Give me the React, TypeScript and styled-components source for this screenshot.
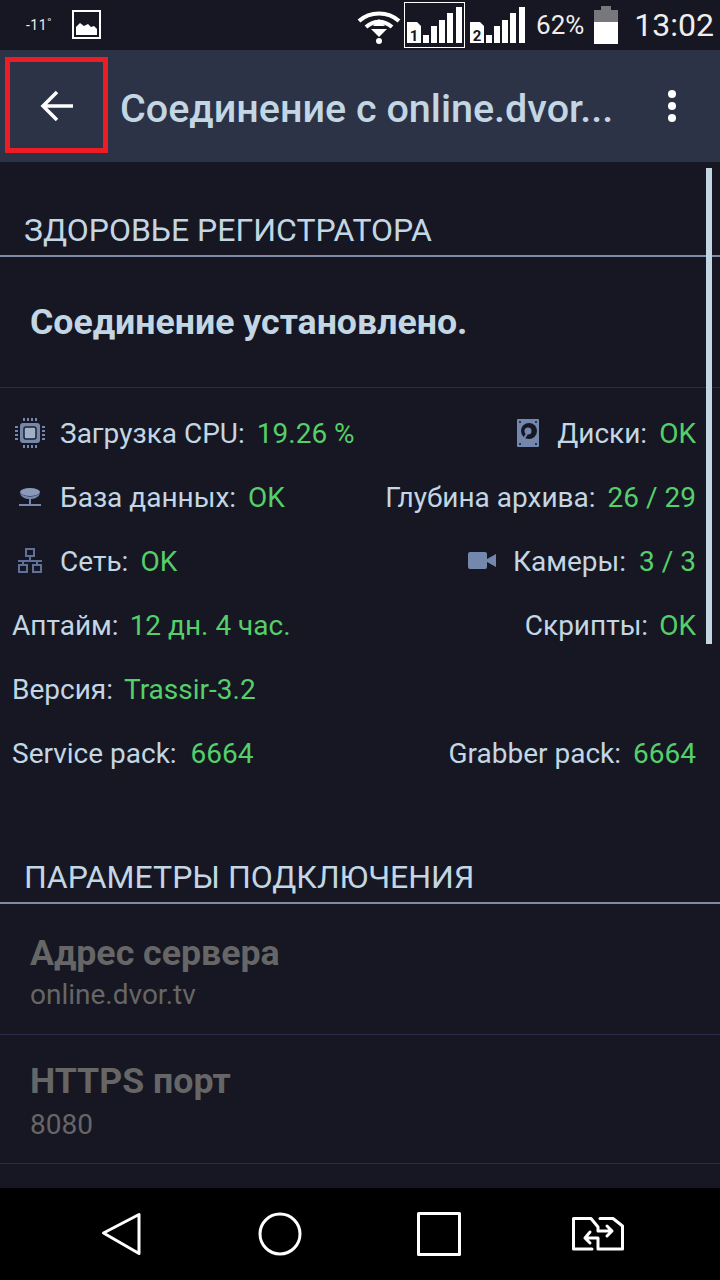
import React from "react";
import styled, { createGlobalStyle } from "styled-components";

const Global = createGlobalStyle`
    html, body { margin:0; padding:0; background:#161722; }
    * { box-sizing:border-box; }
`;

const Screen = styled.div`
    width:720px;
    height:1280px;
    display:flex;
    flex-direction:column;
    overflow:hidden;
    position:relative;
    background:#161722;
    font-family:Roboto, "Liberation Sans", sans-serif;
`;

const StatusBar = styled.div`
    height:50px;
    display:flex;
    align-items:center;
    color:#fff;
    flex:none;
`;
const Temp = styled.span`
    font-size:14px;
    margin-left:26px;
    width:46px;
    letter-spacing:0.5px;
    color:#eee;
`;
const StatusRight = styled.div`
    margin-left:auto;
    display:flex;
    align-items:center;
`;
const WifiIcon = styled.svg`
    margin-top:3px;
    margin-right:3px;
`;
const SignalIcon = styled.svg`
    margin-right:5px;
`;
const Percent = styled.span`
    font-size:26px;
    margin-left:6px;
    margin-right:10px;
    color:#eee;
`;
const Clock = styled.span`
    font-size:32px;
    margin-left:16px;
    margin-right:6px;
    color:#eee;
`;

const Toolbar = styled.div`
    height:112px;
    background:#2d3347;
    display:flex;
    align-items:center;
    flex:none;
    position:relative;
`;
const BackButton = styled.div`
    width:112px;
    display:flex;
    justify-content:center;
    padding-left:2px;
`;
const Title = styled.div`
    width:500px;
    margin-left:8px;
    margin-top:4px;
    font-size:39.500px;
    font-weight:500;
    color:#c3d6e4;
    white-space:nowrap;
`;
const MoreButton = styled.div`
    margin-left:47px;
    display:flex;
`;
const Highlight = styled.div`
    position:absolute;
    left:5px;
    top:7px;
    width:103px;
    height:96px;
    border:5px solid #ee1c25;
`;

const Content = styled.div`
    flex:1;
    min-height:0;
    overflow:hidden;
    position:relative;
`;
const ScrollThumb = styled.div`
    position:absolute;
    right:8px;
    top:6px;
    width:6px;
    height:476px;
    background:#c3d6e4;
`;
const SectionTitle = styled.div<{ $top: number }>`
    margin-top:${({ $top }) => $top}px;
    height:45px;
    padding-left:24px;
    font-size:32px;
    line-height:36px;
    color:#c3d6e4;
    border-bottom:2px solid #7e8ba8;
    white-space:nowrap;
`;
const StatusMessage = styled.div`
    height:131px;
    padding-left:30px;
    display:flex;
    align-items:center;
    font-size:35.700px;
    font-weight:700;
    color:#c3d6e4;
    border-bottom:1px solid #2c2e3a;
`;
const Stats = styled.div`
    padding:13px 24px 0 12px;
`;
const StatRow = styled.div`
    height:64px;
    display:flex;
    justify-content:space-between;
    align-items:center;
`;
const Stat = styled.div`
    display:flex;
    align-items:center;
    font-size:28px;
    color:#c3d6e4;
    white-space:nowrap;
`;
const StatIcon = styled.span<{ $w: number; $gap: number }>`
    display:flex;
    justify-content:center;
    width:${({ $w }) => $w}px;
    margin-right:${({ $gap }) => $gap}px;
`;
const Value = styled.span<{ $gap?: number }>`
    color:#55cf69;
    margin-left:${({ $gap }) => $gap ?? 12}px;
`;
const Param = styled.div<{ $h: number; $pt: number }>`
    height:${({ $h }) => $h}px;
    padding:${({ $pt }) => $pt}px 0 0 30px;
    border-bottom:1px solid #2d2b4a;
`;
const ParamName = styled.div`
    font-size:35.700px;
    font-weight:700;
    line-height:46px;
    color:#666;
`;
const ParamValue = styled.div<{ $mt?: number }>`
    font-size:28px;
    line-height:38px;
    color:#666;
    margin-top:${({ $mt }) => $mt ?? 0}px;
`;

const NavBar = styled.div`
    height:92px;
    background:#000;
    flex:none;
    display:flex;
    align-items:flex-start;
    padding:24px 0 0 101px;
`;
const NavSlot = styled.div<{ $w: number }>`
    width:${({ $w }) => $w}px;
    display:flex;
`;
const SwitchIcon = styled.svg`
    margin-top:5px;
`;

const Cpu = () => (
    <svg width="32" height="32" viewBox="0 0 32 32">
        <rect x="6" y="6" width="20" height="20" rx="3" fill="#7487ac" />
        <rect x="10" y="10" width="12" height="12" rx="2" fill="#a0aec6" stroke="#1d2130" strokeWidth="1.5" />
        <path d="M10 1v3M14 1v3M18 1v3M22 1v3M10 28v3M14 28v3M18 28v3M22 28v3M1 10h3M1 14h3M1 18h3M1 22h3M28 10h3M28 14h3M28 18h3M28 22h3" stroke="#7487ac" strokeWidth="2" />
    </svg>
);
const Database = () => (
    <svg width="24" height="20" viewBox="0 0 24 20">
        <ellipse cx="12" cy="5" rx="10" ry="4" fill="#8a9ab8" />
        <path d="M2 6c1 4 5 6 10 6s9-2 10-6c-2 2-6 3.500-10 3.500S4 8 2 6z" fill="#7487ac" />
        <path d="M12 12v5M1 18h22" stroke="#7487ac" strokeWidth="2" />
    </svg>
);
const Network = () => (
    <svg width="26" height="26" viewBox="0 0 26 26" fill="none" stroke="#5f7196" strokeWidth="2">
        <rect x="9" y="1" width="8" height="7" />
        <rect x="2" y="17" width="8" height="7" />
        <rect x="16" y="17" width="8" height="7" />
        <path d="M13 8v5M6 17v-4h14v4M1 13h24" />
    </svg>
);
const Disk = () => (
    <svg width="23" height="28" viewBox="0 0 23 28">
        <rect width="22" height="28" rx="1" fill="#7487ac" />
        <circle cx="12" cy="12" r="8" fill="#161722" />
        <circle cx="11" cy="12" r="3.500" fill="#7487ac" />
        <path d="M5 22l5-7" stroke="#7487ac" strokeWidth="2" />
        <circle cx="3" cy="3" r="1" fill="#161722" />
        <circle cx="19" cy="3" r="1" fill="#161722" />
        <circle cx="3" cy="25" r="1" fill="#161722" />
        <circle cx="19" cy="25" r="1" fill="#161722" />
    </svg>
);
const Camera = () => (
    <svg width="28" height="18" viewBox="0 0 28 18">
        <rect width="19" height="17" rx="2" fill="#7487ac" />
        <path d="M19 7l9-5v13l-9-5z" fill="#7487ac" />
    </svg>
);
const Wifi = () => (
    <WifiIcon width="44" height="34" viewBox="0 0 44 34" fill="none">
        <path d="M2 11C13 1 31 1 42 11" stroke="#fff" strokeWidth="4" />
        <path d="M9 17c8-7 18-7 26 0" stroke="#fff" strokeWidth="4" />
        <path d="M22 9l6 7H16z" fill="#fff" />
        <path d="M22 27l-8-8h16z" fill="#fff" />
        <circle cx="22" cy="31" r="3" fill="#fff" />
    </WifiIcon>
);
const Signal = ({ sim, framed }: { sim: string; framed?: boolean }) => (
    <SignalIcon width={framed ? 61 : 55} height={framed ? 46 : 38} viewBox={framed ? "0 0 61 46" : "3 4 55 38"}>
        {framed && <rect x="0.500" y="0.500" width="60" height="45" fill="none" stroke="#fff" />}
        <path d="M3 20h10l4 4v17H3z" fill="#fff" />
        <text x="10" y="39" fontSize="15" fontWeight="700" textAnchor="middle" fill="#161722" fontFamily="Roboto">{sim}</text>
        <rect x="19" y="33" width="6" height="8" fill="#fff" />
        <rect x="27" y="24" width="6" height="17" fill="#fff" />
        <rect x="35" y="18" width="6" height="23" fill="#fff" />
        <rect x="43" y="11" width="6" height="30" fill="#fff" />
        <rect x="52" y="5" width="6" height="36" fill="#fff" />
    </SignalIcon>
);
const Battery = () => (
    <svg width="24" height="38" viewBox="0 0 24 38">
        <path d="M7 0h10v4h7v12H0V4h7z" fill="#77777d" />
        <rect y="16" width="24" height="22" fill="#fff" />
    </svg>
);

export default function App() {
    return (
        <Screen>
            <Global />
            <StatusBar>
                <Temp>-11˚</Temp>
                <svg width="30" height="30" viewBox="0 0 30 30">
                    <rect x="1" y="1" width="27" height="27" fill="none" stroke="#fff" strokeWidth="2" />
                    <path d="M4 25v-8l4-4 4 3 4-2 3 3 3-1 3 3v6z" fill="#fff" />
                </svg>
                <StatusRight>
                    <Wifi />
                    <Signal sim="1" framed />
                    <Signal sim="2" />
                    <Percent>62%</Percent>
                    <Battery />
                    <Clock>13:02</Clock>
                </StatusRight>
            </StatusBar>
            <Toolbar>
                <BackButton>
                    <svg width="34" height="32" viewBox="0 0 34 32" fill="none" stroke="#fff" strokeWidth="3.500">
                        <path d="M33 16H3M17 2L3 16l14 14" />
                    </svg>
                </BackButton>
                <Title>Соединение с online.dvor...</Title>
                <MoreButton>
                    <svg width="10" height="34" viewBox="0 0 10 34" fill="#fff">
                        <circle cx="5" cy="5" r="4" />
                        <circle cx="5" cy="17" r="4" />
                        <circle cx="5" cy="29" r="4" />
                    </svg>
                </MoreButton>
                <Highlight />
            </Toolbar>
            <Content>
                <SectionTitle $top={50}>ЗДОРОВЬЕ РЕГИСТРАТОРА</SectionTitle>
                <StatusMessage>Соединение установлено.</StatusMessage>
                <Stats>
                    <StatRow>
                        <Stat><StatIcon $w={36} $gap={12}><Cpu /></StatIcon>Загрузка CPU:<Value>19.26 %</Value></Stat>
                        <Stat><StatIcon $w={23} $gap={17}><Disk /></StatIcon>Диски:<Value>OK</Value></Stat>
                    </StatRow>
                    <StatRow>
                        <Stat><StatIcon $w={36} $gap={12}><Database /></StatIcon>База данных:<Value>OK</Value></Stat>
                        <Stat>Глубина архива:<Value>26 / 29</Value></Stat>
                    </StatRow>
                    <StatRow>
                        <Stat><StatIcon $w={36} $gap={12}><Network /></StatIcon>Сеть:<Value>OK</Value></Stat>
                        <Stat><StatIcon $w={28} $gap={17}><Camera /></StatIcon>Камеры:<Value $gap={13}>3 / 3</Value></Stat>
                    </StatRow>
                    <StatRow>
                        <Stat>Аптайм:<Value $gap={11}>12 дн. 4 час.</Value></Stat>
                        <Stat>Скрипты:<Value $gap={11}>OK</Value></Stat>
                    </StatRow>
                    <StatRow>
                        <Stat>Версия:<Value $gap={11}>Trassir-3.2</Value></Stat>
                    </StatRow>
                    <StatRow>
                        <Stat>Service pack:<Value $gap={14}>6664</Value></Stat>
                        <Stat>Grabber pack:<Value>6664</Value></Stat>
                    </StatRow>
                </Stats>
                <SectionTitle $top={74}>ПАРАМЕТРЫ ПОДКЛЮЧЕНИЯ</SectionTitle>
                <Param $h={131} $pt={26}>
                    <ParamName>Адрес сервера</ParamName>
                    <ParamValue>online.dvor.tv</ParamValue>
                </Param>
                <Param $h={129} $pt={23}>
                    <ParamName>HTTPS порт</ParamName>
                    <ParamValue $mt={2}>8080</ParamValue>
                </Param>
                <ScrollThumb />
            </Content>
            <NavBar>
                <NavSlot $w={157}>
                    <svg width="40" height="44" viewBox="0 0 40 44" fill="none" stroke="#fff" strokeWidth="3" strokeLinejoin="round">
                        <path d="M38 2.500v39L2.500 21z" />
                    </svg>
                </NavSlot>
                <NavSlot $w={159}>
                    <svg width="44" height="44" viewBox="0 0 44 44" fill="none" stroke="#fff" strokeWidth="3">
                        <circle cx="22" cy="22" r="20" />
                    </svg>
                </NavSlot>
                <NavSlot $w={155}>
                    <svg width="44" height="44" viewBox="0 0 44 44" fill="none" stroke="#fff" strokeWidth="3" strokeLinejoin="round">
                        <rect x="1.500" y="1.500" width="41" height="41" />
                    </svg>
                </NavSlot>
                <NavSlot $w={52}>
                    <SwitchIcon width="52" height="34" viewBox="0 0 52 34" fill="none" stroke="#fff" strokeWidth="3" strokeLinejoin="round" strokeLinecap="round">
                        <path d="M20 32H1.500V1.500H19l7 8.500v4h14M35 9l5 5-5 5" />
                        <path d="M28 1.500h13l9.500 7.500v23H26V21H13M18 15l-5 6 5 5" />
                    </SwitchIcon>
                </NavSlot>
            </NavBar>
        </Screen>
    );
}
